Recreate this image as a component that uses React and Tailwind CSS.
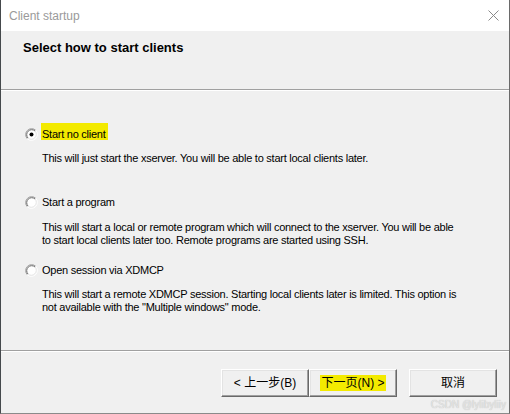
import React from 'react'

const ui = { fontFamily: '"Liberation Sans", Arial, sans-serif' }
const cjk = { fontFamily: '"Liberation Sans", "Noto Sans CJK SC", sans-serif' }

function Radio({ checked }) {
  return (
    <svg width="13" height="13" viewBox="0 0 13 13" className="block">
      <circle cx="6.5" cy="6.5" r="5.5" fill="#fff" />
      <path d="M2.26 10.74 A6 6 0 0 1 10.74 2.26" fill="none" stroke="#a0a0a0" strokeWidth="1" />
      <path d="M2.97 10.03 A5 5 0 0 1 10.03 2.97" fill="none" stroke="#696969" strokeWidth="1" />
      <path d="M10.74 2.26 A6 6 0 0 1 2.26 10.74" fill="none" stroke="#ffffff" strokeWidth="1" />
      <path d="M10.03 2.97 A5 5 0 0 1 2.97 10.03" fill="none" stroke="#e3e3e3" strokeWidth="1" />
      {checked && <circle cx="6.5" cy="6.5" r="2" fill="#000" />}
    </svg>
  )
}

function Option({ checked, label, highlight, descGap, children }) {
  return (
    <div className="h-[68px]">
      <div className="flex items-start">
        <div className="w-[16px] pt-[5px]">
          <Radio checked={checked} />
        </div>
        <span
          className={`inline-block h-[17px] leading-[22px] pl-[1px] pr-[2px] text-[11px] tracking-[-0.25px] text-black whitespace-nowrap ${
            highlight ? 'bg-[#f3ea00]' : ''
          }`}
        >
          {label}
        </span>
      </div>
      <p
        className={`pl-[17px] text-[11px] leading-[13px] tracking-[-0.25px] text-black whitespace-nowrap ${descGap}`}
      >
        {children}
      </p>
    </div>
  )
}

function Button({ children, highlight }) {
  return (
    <button
      style={cjk}
      className="h-[28px] w-[88px] flex items-center justify-center bg-[#f0f0f0] border-t border-l border-t-white border-l-white border-b border-r border-b-[#696969] border-r-[#696969] shadow-[inset_-1px_-1px_0_#a0a0a0,inset_1px_1px_0_#e3e3e3] text-[12px] text-black"
    >
      <span className={`px-[1px] leading-[16px] ${highlight ? 'bg-[#f3ea00]' : ''}`}>{children}</span>
    </button>
  )
}

export default function App() {
  return (
    <div
      style={ui}
      className="relative w-[510px] h-[414px] flex flex-col bg-[#f0f0f0] border-l border-r border-b border-l-[#45494c] border-r-[#6a6a6a] border-b-[#8a8a8a] overflow-hidden"
    >
      {/* title bar */}
      <div className="h-[31px] shrink-0 bg-white flex items-center justify-between pl-[8px] pr-[10px]">
        <span className="text-[12px] leading-[16px] text-[#9a9a9a]">Client startup</span>
        <svg width="11" height="11" viewBox="0 0 11 11">
          <path d="M0.5 0.5 L10.5 10.5 M10.5 0.5 L0.5 10.5" stroke="#8a8a8a" strokeWidth="1" />
        </svg>
      </div>

      {/* header */}
      <div className="h-[58px] shrink-0 pl-[22px] pt-[9px]">
        <h1 className="text-[13px] leading-[16px] font-bold text-black">Select how to start clients</h1>
      </div>
      <div className="h-px bg-[#a0a0a0]" />
      <div className="h-px bg-white" />

      {/* options */}
      <div className="flex-1 pl-[24px] pt-[32px]">
        <Option checked label="Start no client" highlight descGap="mt-[11px]">
          This will just start the xserver. You will be able to start local clients later.
        </Option>
        <Option label="Start a program" descGap="mt-[12px]">
          This will start a local or remote program which will connect to the xserver. You will be able
          <br />
          to start local clients later too. Remote programs are started using SSH.
        </Option>
        <Option label="Open session via XDMCP" descGap="mt-[11px]">
          This will start a remote XDMCP session. Starting local clients later is limited. This option is
          <br />
          not available with the "Multiple windows" mode.
        </Option>
      </div>

      <div className="h-px bg-[#a0a0a0]" />
      <div className="h-px bg-white" />

      {/* footer buttons */}
      <div className="h-[61px] shrink-0 flex items-start justify-end pt-[17px] pr-[12px]">
        <div className="flex">
          <Button>&lt; 上一步(B)</Button>
          <Button highlight>下一页(N) &gt;</Button>
        </div>
        <div className="w-[12px]" />
        <Button>取消</Button>
      </div>

      <span className="absolute right-[3px] bottom-[2px] text-[10px] leading-[12px] text-[#e6e6e6] [text-shadow:0_0_1px_#b0b0b0]">
        CSDN @lylibyliiy
      </span>
    </div>
  )
}
